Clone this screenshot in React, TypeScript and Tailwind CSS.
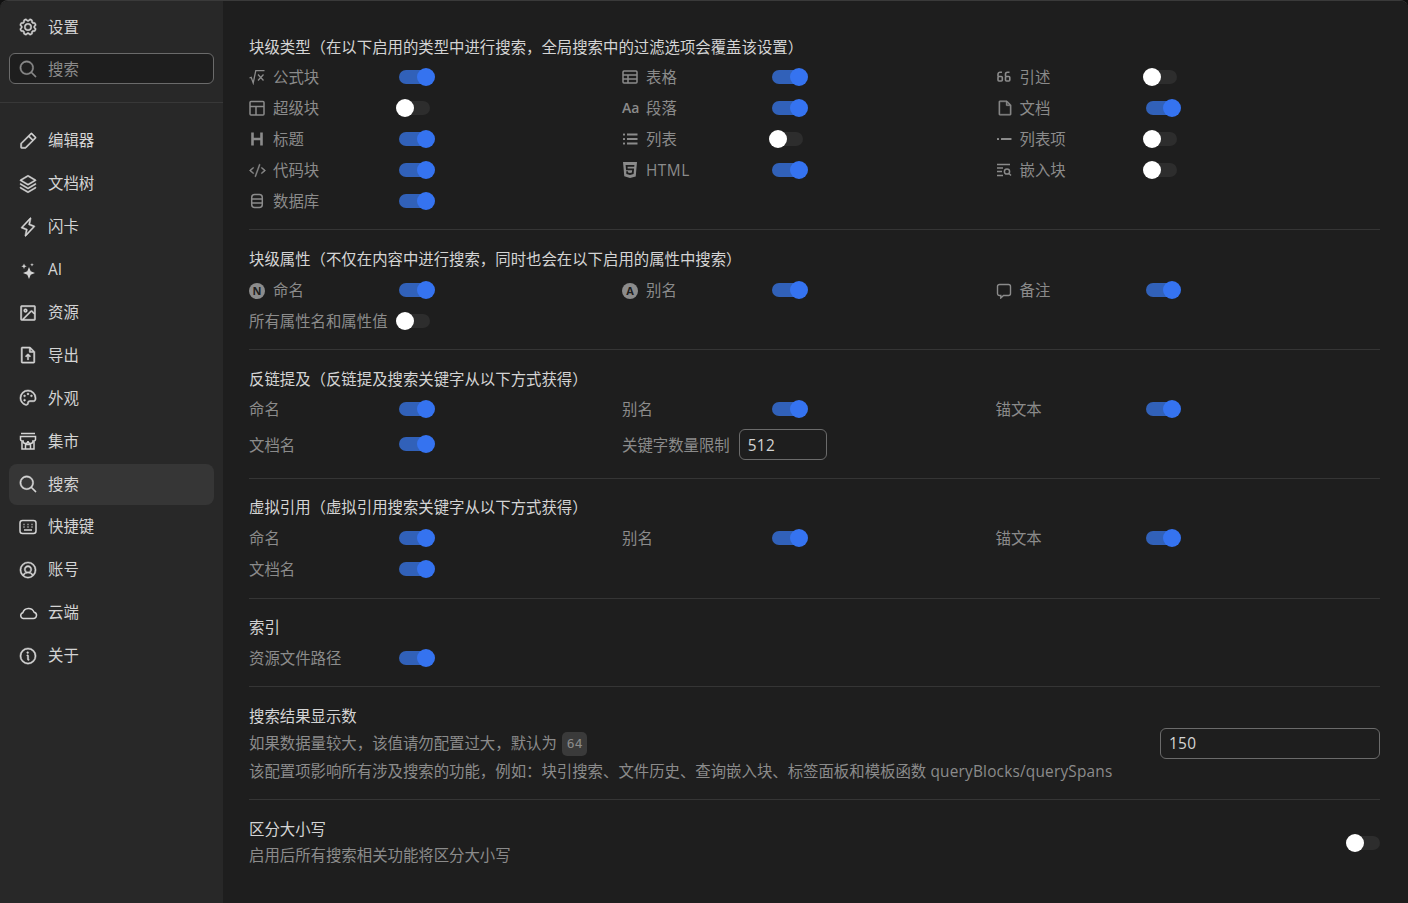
import React, { ReactNode } from 'react'
import {
  PiGear, PiMagnifyingGlass, PiPencilSimple, PiStack, PiLightning, PiImageSquare, PiFileArrowUp,
  PiPalette, PiUserCircle, PiInfo, PiCode, PiFile,
} from 'react-icons/pi'
import { SiHtml5 } from 'react-icons/si'

const NAV_STROKE = 6

const Sparkles = () => (
  <svg width="20" height="20" viewBox="0 0 20 20" fill="currentColor">
    <path d="M11 7l1.7 4.3L17 13l-4.3 1.700L11 19l-1.700-4.300L5 13l4.300-1.700z" />
    <path d="M6 3.500l.8 1.900 1.900.8-1.900.8L6 8.900l-.8-1.900-1.900-.8 1.900-.8z" />
    <path d="M14 3l.5 1.300 1.300.5-1.300.5-.5 1.300-.5-1.300-1.300-.5 1.300-.5z" />
  </svg>
)

const Storefront = () => (
  <svg width="20" height="20" viewBox="0 0 20 20" fill="none" stroke="currentColor" strokeWidth="1.5">
    <path d="M3 2.500h14" />
    <path d="M2.500 5.500h15v3a2 2 0 0 1-2.500 1.500 2.500 2.500 0 0 1-5 0 2.500 2.500 0 0 1-5 0A2 2 0 0 1 2.500 8.500z" />
    <path d="M4 10.500V18h12v-7.500M7.500 18v-4.500h5V18" />
  </svg>
)

const Keyboard = () => (
  <svg width="20" height="20" viewBox="0 0 20 20" fill="none" stroke="currentColor" strokeWidth="1.5">
    <rect x="2" y="3.500" width="16" height="13" rx="2.500" />
    <path d="M5.500 7.500h1M9.500 7.500h1M13.500 7.500h1M5.500 10h1M9.500 10h1M13.500 10h1M6 13h8" />
  </svg>
)

const Cloud = () => (
  <svg width="20" height="20" viewBox="0 0 20 20" fill="none" stroke="currentColor" strokeWidth="1.5">
    <path d="M5.200 15.500h10a3.200 3.200 0 0 0 .9-6.300 6 6 0 0 0-11.300.5 3 3 0 0 0 .4 5.800z" />
  </svg>
)

const Sqrt = () => (
  <svg width="16" height="16" viewBox="0 0 16 16" fill="none" stroke="currentColor" strokeWidth="1.3">
    <path d="M0.500 9l1.700-.7 2 5.700L6.800 1.700h8.700" />
    <path d="M9 5.500l5.500 6M14.500 5.500L9 11.500" />
  </svg>
)

const LayoutIcon = () => (
  <svg width="16" height="16" viewBox="0 0 16 16" fill="none" stroke="currentColor" strokeWidth="1.5">
    <rect x="1" y="1.500" width="14" height="13.500" rx="1" />
    <path d="M1 6.500h14M7 6.500V15" />
  </svg>
)

const Heading = () => (
  <svg width="16" height="16" viewBox="0 0 16 16" fill="none" stroke="currentColor" strokeWidth="2.6">
    <path d="M3.500 1.500v13M12.500 1.500v13M3.500 8h9" />
  </svg>
)

const Database = () => (
  <svg width="16" height="16" viewBox="0 0 16 16" fill="none" stroke="currentColor" strokeWidth="1.5">
    <rect x="2.700" y="1.500" width="10.600" height="13" rx="3" />
    <path d="M2.700 6h10.600M2.700 10h10.600" />
  </svg>
)

const TableIcon = () => (
  <svg width="16" height="16" viewBox="0 0 16 16" fill="none" stroke="currentColor" strokeWidth="1.5">
    <rect x="1" y="2" width="14" height="12" rx="1" />
    <path d="M1 6h14M1 10h14M6 6v8" />
  </svg>
)

const ListIcon = () => (
  <svg width="16" height="16" viewBox="0 0 16 16" fill="currentColor">
    <rect x="1" y="2.500" width="2" height="2" rx="0.500" />
    <rect x="1" y="7" width="2" height="2" rx="0.500" />
    <rect x="1" y="11.500" width="2" height="2" rx="0.500" />
    <rect x="5" y="2.500" width="10.500" height="2" />
    <rect x="5" y="7" width="10.500" height="2" />
    <rect x="5" y="11.500" width="10.500" height="2" />
  </svg>
)

const Quote66 = () => (
  <svg width="16" height="16" viewBox="0 0 16 16" fill="none" stroke="currentColor" strokeWidth="1.6">
    <path d="M2 7.500V5.200a2 2 0 0 1 2-2h2" />
    <rect x="2" y="7.500" width="4.300" height="4.500" rx="1" />
    <path d="M9.500 7.500V5.200a2 2 0 0 1 2-2h2" />
    <rect x="9.500" y="7.500" width="4.300" height="4.500" rx="1" />
  </svg>
)

const ListItem = () => (
  <svg width="16" height="16" viewBox="0 0 16 16" fill="currentColor">
    <rect x="1" y="7" width="2" height="2" rx="0.500" />
    <rect x="5" y="7" width="10.500" height="2" rx="0.500" />
  </svg>
)

const Embed = () => (
  <svg width="16" height="16" viewBox="0 0 16 16" fill="none" stroke="currentColor" strokeWidth="1.5">
    <path d="M1 2.500h13M1 6h6M1 9.500h5M1 13.500h6" />
    <circle cx="11" cy="9.500" r="2.600" />
    <path d="M13 11.500l2 2" />
  </svg>
)

const Bubble = () => (
  <svg width="16" height="16" viewBox="0 0 16 16" fill="none" stroke="currentColor" strokeWidth="1.4">
    <path d="M3.500 1.500h9a2 2 0 0 1 2 2v7a2 2 0 0 1-2 2H7.500l-2.700 2.500v-2.500H3.500a2 2 0 0 1-2-2v-7a2 2 0 0 1 2-2z" />
  </svg>
)

const LetterBadge = ({ letter }: { letter: string }) => (
  <span className="flex size-4 items-center justify-center rounded-full bg-[#8c8c8c] text-[11px] leading-none font-bold text-[#1e1e1e]">
    {letter}
  </span>
)

const Toggle = ({ on }: { on?: boolean }) => (
  <span className={`relative block h-[14px] w-[31px] shrink-0 rounded-full ${on ? 'bg-[#3161b9]' : 'bg-[#2d2d2d]'}`}>
    {on
      ? <span className="absolute top-[-2px] right-[-4.5px] size-[18px] rounded-full bg-[#3573f0]" />
      : <span className="absolute top-[-2px] left-[-3px] size-[18px] rounded-full bg-white" />}
  </span>
)

type Item = { label: string; icon?: ReactNode; on?: boolean; low?: boolean }

const Row = ({ label, icon, on, low }: Item) => (
  <div className="flex h-[31px] items-center">
    <div className={`flex w-[150px] shrink-0 items-center whitespace-nowrap text-[#8b8b8b] ${low ? 'pt-[3px]' : 'pt-px'}`}>
      {icon && <span className="flex w-[24px] shrink-0 items-center">{icon}</span>}
      <span className={label === 'HTML' ? 'tracking-[0.5px]' : ''}>{label}</span>
    </div>
    <Toggle on={on} />
  </div>
)

const Grid = ({ children }: { children: ReactNode }) => (
  <div className="grid grid-cols-[373px_373.5px_1fr]">{children}</div>
)

const Section = ({ title, children, pad = 'pt-[17.5px] pb-[12.6px]', gap = 'mb-[2.5px]' }: { title: string; children: ReactNode; pad?: string; gap?: string }) => (
  <section className={`border-b border-[#353535] ${pad}`}>
    <h2 className={`h-[24px] leading-[24px] text-[#d4d4d4] ${gap}`}>{title}</h2>
    {children}
  </section>
)

const nav = [
  { label: '编辑器', icon: <PiPencilSimple size={20} strokeWidth={NAV_STROKE} /> },
  { label: '文档树', icon: <PiStack size={20} strokeWidth={NAV_STROKE} /> },
  { label: '闪卡', icon: <PiLightning size={20} strokeWidth={NAV_STROKE} /> },
  { label: 'AI', icon: <Sparkles /> },
  { label: '资源', icon: <PiImageSquare size={20} strokeWidth={NAV_STROKE} /> },
  { label: '导出', icon: <PiFileArrowUp size={20} strokeWidth={NAV_STROKE} /> },
  { label: '外观', icon: <PiPalette size={20} strokeWidth={NAV_STROKE} /> },
  { label: '集市', icon: <Storefront /> },
  { label: '搜索', icon: <PiMagnifyingGlass size={20} strokeWidth={NAV_STROKE} />, active: true },
  { label: '快捷键', icon: <Keyboard /> },
  { label: '账号', icon: <PiUserCircle size={20} strokeWidth={NAV_STROKE} /> },
  { label: '云端', icon: <Cloud /> },
  { label: '关于', icon: <PiInfo size={20} strokeWidth={NAV_STROKE} /> },
]

const blockTypes: Item[] = [
  { label: '公式块', icon: <Sqrt />, on: true },
  { label: '表格', icon: <TableIcon />, on: true },
  { label: '引述', icon: <Quote66 /> },
  { label: '超级块', icon: <LayoutIcon /> },
  { label: '段落', icon: <span className="text-[14px] leading-none font-semibold">Aa</span>, on: true },
  { label: '文档', icon: <PiFile size={18} strokeWidth={6} />, on: true },
  { label: '标题', icon: <Heading />, on: true },
  { label: '列表', icon: <ListIcon /> },
  { label: '列表项', icon: <ListItem /> },
  { label: '代码块', icon: <PiCode size={17} strokeWidth={6} />, on: true },
  { label: 'HTML', icon: <SiHtml5 size={16} />, on: true },
  { label: '嵌入块', icon: <Embed /> },
  { label: '数据库', icon: <Database />, on: true },
]

const searchOn: Item[] = [
  { label: '命名', on: true },
  { label: '别名', on: true },
  { label: '锚文本', on: true },
]

const App = () => {
  return (
    <div className="h-[903px] w-[1408px] overflow-hidden bg-[#111111] font-['Open_Sans','Noto_Sans_CJK_SC',sans-serif] text-[15.4px]">
      <div className="flex h-full overflow-hidden rounded-t-lg border-t border-[#3a3a3a]">
        <aside className="w-[223px] shrink-0 bg-[#282828] text-[#d4d4d4]">
          <div className="mt-[11px] flex h-[30px] items-center gap-[10px] pl-[18px]">
            <PiGear size={20} strokeWidth={NAV_STROKE} />
            <span className="pt-px">设置</span>
          </div>
          <div className="mx-[9px] mt-[11px] flex h-[31px] items-center gap-[10px] rounded-md border border-[#6b6b6b] bg-[#1e1e1e] pl-[8px] text-[#8b8b8b]">
            <PiMagnifyingGlass size={20} strokeWidth={NAV_STROKE} />
            <span className="pt-[3px]">搜索</span>
          </div>
          <div className="mt-[18px] border-t border-[#383838] px-[9px] pt-[17.4px]">
            {nav.map((n) => (
              <div
                key={n.label}
                className={`mb-[1.92px] flex h-[41px] items-center gap-[10px] rounded-lg pl-[9px] ${n.active ? 'bg-[#363636]' : ''}`}
              >
                {n.icon}
                <span>{n.label}</span>
              </div>
            ))}
          </div>
        </aside>

        <main className="flex-1 bg-[#1e1e1e] pt-[16px] pr-[28px] pl-[26px]">
          <Section pad="pt-[19px] pb-[12.5px]" gap="mb-[1.5px]" title="块级类型（在以下启用的类型中进行搜索，全局搜索中的过滤选项会覆盖该设置）">
            <Grid>
              {blockTypes.map((b) => <Row key={b.label} {...b} />)}
            </Grid>
          </Section>

          <Section title="块级属性（不仅在内容中进行搜索，同时也会在以下启用的属性中搜索）">
            <Grid>
              <Row low label="命名" icon={<LetterBadge letter="N" />} on />
              <Row low label="别名" icon={<LetterBadge letter="A" />} on />
              <Row low label="备注" icon={<Bubble />} on />
              <Row low label="所有属性名和属性值" />
            </Grid>
          </Section>

          <Section pad="pt-[18.5px] pb-[12.6px]" gap="mb-[1.5px]" title="反链提及（反链提及搜索关键字从以下方式获得）">
            <Grid>
              {searchOn.map((b) => <Row key={b.label} {...b} />)}
              <div className="mb-[2px] flex h-[39px] items-center">
                <span className="w-[150px] shrink-0 pt-[3px] text-[#8b8b8b]">文档名</span>
                <Toggle on />
              </div>
              <div className="flex h-[39px] items-center gap-[9px] text-[#8b8b8b]">
                <span className="pt-[3px]">关键字数量限制</span>
                <input
                  readOnly
                  value="512"
                  className="h-[31px] w-[88px] rounded-md border border-[#6b6b6b] bg-transparent px-[8px] pt-[2px] tracking-[0.3px] text-[#d4d4d4] outline-none"
                />
              </div>
            </Grid>
          </Section>

          <Section pad="pt-[16.5px] pb-[13.6px]" title="虚拟引用（虚拟引用搜索关键字从以下方式获得）">
            <Grid>
              {searchOn.map((b) => <Row key={b.label} {...b} />)}
              <Row label="文档名" on />
            </Grid>
          </Section>

          <Section title="索引">
            <Row label="资源文件路径" on />
          </Section>

          <section className="flex items-center justify-between border-b border-[#353535] pt-[17.5px] pb-[13.5px]">
            <div>
              <h2 className="mb-[1px] h-[24px] leading-[24px] text-[#d4d4d4]">搜索结果显示数</h2>
              <p className="flex h-[28px] items-center text-[#8b8b8b]">
                如果数据量较大，该值请勿配置过大，默认为
                <code className="ml-[5px] rounded-[5px] bg-[#3a3a3a] px-[5px] py-[2px] font-['DejaVu_Sans_Mono',monospace] text-[13px] text-[#8b8b8b]">64</code>
              </p>
              <p className="h-[28px] leading-[28px] text-[#8b8b8b]">
                该配置项影响所有涉及搜索的功能，例如：块引搜索、文件历史、查询嵌入块、标签面板和模板函数
                <span className="tracking-[0.2px]"> queryBlocks/querySpans</span>
              </p>
            </div>
            <input
              readOnly
              value="150"
              className="mb-[4px] h-[31px] w-[220px] rounded-md border border-[#6b6b6b] bg-transparent px-[8px] tracking-[0.3px] text-[#d4d4d4] outline-none"
            />
          </section>

          <section className="flex items-center justify-between pt-[18px]">
            <div>
              <h2 className="h-[24px] leading-[24px] text-[#d4d4d4]">区分大小写</h2>
              <p className="h-[28px] leading-[28px] text-[#8b8b8b]">启用后所有搜索相关功能将区分大小写</p>
            </div>
            <span className="mb-[3px]"><Toggle /></span>
          </section>
        </main>
      </div>
    </div>
  )
}

export default App
